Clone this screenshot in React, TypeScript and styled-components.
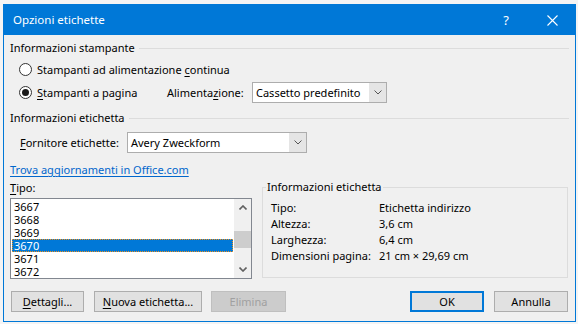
import React from 'react';
import styled, {createGlobalStyle, css} from 'styled-components';

const GlobalStyle = createGlobalStyle`
  html, body {
    margin: 0;
    padding: 0;
    background: #f4f4f4;
  }
  body {
    font-family: "Noto Sans", "Liberation Sans", sans-serif;
    font-size: 11px;
    color: #000;
    white-space: nowrap;
  }
`

const Screen = styled.div`
  width: 578px;
  height: 324px;
  padding: 4px 0 0 3px;
  box-sizing: border-box;
`

const Dialog = styled.div`
  width: 573px;
  height: 318px;
  border: 1px solid #0078d7;
  background: #f0f0f0;
  box-sizing: border-box;
  display: flex;
  flex-direction: column;
`

const TitleBar = styled.div`
  height: 30px;
  background: #0078d7;
  color: #fff;
  display: flex;
  align-items: center;
  padding-left: 9px;
  font-size: 11.5px;
`

const Title = styled.span`
  flex: 1;
  line-height: 16px;
`

const TitleButton = styled.div`
  width: 46px;
  height: 30px;
  display: flex;
  align-items: center;
  justify-content: center;
  font-size: 13px;
`

const Body = styled.div`
  padding: 5px 6px 0 6px;
  display: flex;
  flex-direction: column;
`

const SectionHeader = styled.div<{$top?: number}>`
  display: flex;
  align-items: center;
  gap: 4px;
  height: 16px;
  line-height: 16px;
  margin-top: ${p => p.$top ?? 0}px;
  &::after {
    content: "";
    flex: 1;
    height: 1px;
    background: #dcdcdc;
  }
`

const Row = styled.div<{$top?: number; $indent?: number}>`
  display: flex;
  align-items: center;
  height: 21px;
  margin-top: ${p => p.$top ?? 0}px;
  margin-left: ${p => p.$indent ?? 0}px;
`

const RadioOption = styled.label<{$width?: number}>`
  display: flex;
  align-items: center;
  gap: 5px;
  ${p => p.$width && css`width: ${p.$width}px;`}
`

const RadioCircle = styled.span<{$checked?: boolean}>`
  width: 13px;
  height: 13px;
  border-radius: 50%;
  border: 1px solid #333;
  background: #fff;
  box-sizing: border-box;
  display: flex;
  align-items: center;
  justify-content: center;
  &::after {
    content: "";
    width: 7px;
    height: 7px;
    border-radius: 50%;
    background: ${p => (p.$checked ? '#1a1a1a' : 'transparent')};
  }
`

const Mn = styled.span`
  text-decoration: underline;
  text-underline-offset: 2px;
`

const FieldLabel = styled.span<{$width: number}>`
  width: ${p => p.$width}px;
`

const Select = styled.div<{$width: number}>`
  width: ${p => p.$width}px;
  height: 21px;
  border: 1px solid #adadad;
  background: #fff;
  box-sizing: border-box;
  display: flex;
  align-items: center;
`

const SelectValue = styled.span`
  flex: 1;
  padding-left: 3px;
`

const SelectArrow = styled.span`
  width: 17px;
  height: 100%;
  background: #e5e5e5;
  display: flex;
  align-items: center;
  justify-content: center;
`

const Link = styled.a`
  display: block;
  align-self: flex-start;
  margin-top: 9px;
  line-height: 16px;
  color: #0066cc;
  text-decoration: underline;
  text-underline-offset: 2px;
`

const Lower = styled.div`
  display: flex;
  align-items: flex-start;
  margin-top: 1px;
`

const ListColumn = styled.div`
  display: flex;
  flex-direction: column;
`

const ListLabel = styled.span`
  line-height: 16px;
  margin-top: 1px;
`

const ListBox = styled.div`
  width: 242px;
  height: 81px;
  margin-top: 2px;
  border: 1px solid #828790;
  background: #fff;
  box-sizing: border-box;
  display: flex;
`

const Items = styled.div`
  flex: 1;
  padding: 1px 1px 0 1px;
`

const Item = styled.div<{$selected?: boolean}>`
  height: 13px;
  line-height: 13px;
  padding-left: 2px;
  ${p => p.$selected && css`
    background: #0078d7;
    color: #fff;
    outline: 1px dotted #f0901a;
    outline-offset: -1px;
  `}
`

const ScrollBar = styled.div`
  width: 17px;
  background: #f0f0f0;
  display: flex;
  flex-direction: column;
`

const ScrollButton = styled.div`
  height: 17px;
  display: flex;
  align-items: center;
  justify-content: center;
`

const ScrollTrack = styled.div`
  flex: 1;
`

const ScrollThumb = styled.div`
  height: 17px;
  background: #cdcdcd;
`

const GroupBox = styled.fieldset`
  width: 306px;
  height: 99px;
  margin: 0 0 0 10px;
  padding: 0;
  border: 1px solid #dcdcdc;
  box-sizing: border-box;
  min-width: 0;
`

const Legend = styled.legend`
  margin-left: 3px;
  padding: 0 1px;
  line-height: 16px;
`

const InfoGrid = styled.div`
  display: grid;
  grid-template-columns: 108px auto;
  line-height: 16px;
  margin: 5px 0 0 8px;
`

const ButtonRow = styled.div`
  display: flex;
  margin-top: 12px;
`

const Button = styled.div<{$width: number; $gap?: number; $disabled?: boolean; $default?: boolean}>`
  width: ${p => p.$width}px;
  height: 21px;
  margin-left: ${p => p.$gap ?? 0}px;
  background: #e1e1e1;
  border: 1px solid #adadad;
  box-sizing: border-box;
  display: flex;
  align-items: center;
  justify-content: center;
  ${p => p.$disabled && css`
    background: #cccccc;
    border-color: #bfbfbf;
    color: #a0a0a0;
  `}
  ${p => p.$default && css`
    border: 2px solid #0078d7;
  `}
`

const Chevron = ({up, color = '#555', w = 1}: {up?: boolean; color?: string; w?: number}) => (
  <svg width="8" height="5" viewBox="0 0 8 5">
    <path d={up ? 'M0.5 4.5 L4 1 L7.5 4.5' : 'M0.5 0.5 L4 4 L7.5 0.5'} fill="none" stroke={color} strokeWidth={w} />
  </svg>
)

const items = ['3667', '3668', '3669', '3670', '3671', '3672'];

const info: [string, string][] = [
  ['Tipo:', 'Etichetta indirizzo'],
  ['Altezza:', '3,6 cm'],
  ['Larghezza:', '6,4 cm'],
  ['Dimensioni pagina:', '21 cm × 29,69 cm'],
];

const App: React.FC = () => {
  return (
    <Screen>
      <GlobalStyle />
      <Dialog>
        <TitleBar>
          <Title>Opzioni etichette</Title>
          <TitleButton>?</TitleButton>
          <TitleButton>
            <svg width="11" height="11" viewBox="0 0 11 11">
              <path d="M0.5 0.5 L10.5 10.5 M10.5 0.5 L0.5 10.5" stroke="#fff" strokeWidth="1.1" />
            </svg>
          </TitleButton>
        </TitleBar>
        <Body>
          <SectionHeader>Informazioni stampante</SectionHeader>
          <Row $top={3} $indent={9}>
            <RadioOption>
              <RadioCircle />
              <span>Stampanti ad alimentazione <Mn>c</Mn>ontinua</span>
            </RadioOption>
          </Row>
          <Row $top={2} $indent={9}>
            <RadioOption $width={148}>
              <RadioCircle $checked />
              <span><Mn>S</Mn>tampanti a pagina</span>
            </RadioOption>
            <FieldLabel $width={85}>Alimenta<Mn>z</Mn>ione:</FieldLabel>
            <Select $width={135}>
              <SelectValue>Cassetto predefinito</SelectValue>
              <SelectArrow><Chevron /></SelectArrow>
            </Select>
          </Row>
          <SectionHeader $top={7}>Informazioni etichetta</SectionHeader>
          <Row $top={6} $indent={10}>
            <FieldLabel $width={107}><Mn>F</Mn>ornitore etichette:</FieldLabel>
            <Select $width={180}>
              <SelectValue>Avery Zweckform</SelectValue>
              <SelectArrow><Chevron /></SelectArrow>
            </Select>
          </Row>
          <Link href="#">Trova aggiornamenti in Office.com</Link>
          <Lower>
            <ListColumn>
              <ListLabel><Mn>T</Mn>ipo:</ListLabel>
              <ListBox>
                <Items>
                  {items.map(i => (
                    <Item key={i} $selected={i === '3670'}>{i}</Item>
                  ))}
                </Items>
                <ScrollBar>
                  <ScrollButton><Chevron up color="#606060" w={1.6} /></ScrollButton>
                  <ScrollTrack>
                    <ScrollThumb style={{marginTop: 15}} />
                  </ScrollTrack>
                  <ScrollButton><Chevron color="#606060" w={1.6} /></ScrollButton>
                </ScrollBar>
              </ListBox>
            </ListColumn>
            <GroupBox>
              <Legend>Informazioni etichetta</Legend>
              <InfoGrid>
                {info.map(([k, v]) => (
                  <React.Fragment key={k}>
                    <span>{k}</span>
                    <span>{v}</span>
                  </React.Fragment>
                ))}
              </InfoGrid>
            </GroupBox>
          </Lower>
          <ButtonRow>
            <Button $width={73} $gap={1}><Mn>D</Mn>ettagli...</Button>
            <Button $width={108} $gap={10}><Mn>N</Mn>uova etichetta...</Button>
            <Button $width={75} $gap={9} $disabled>Elimina</Button>
            <Button $width={74} $gap={124} $default>OK</Button>
            <Button $width={74} $gap={10}>Annulla</Button>
          </ButtonRow>
        </Body>
      </Dialog>
    </Screen>
  )
}

export default App;
